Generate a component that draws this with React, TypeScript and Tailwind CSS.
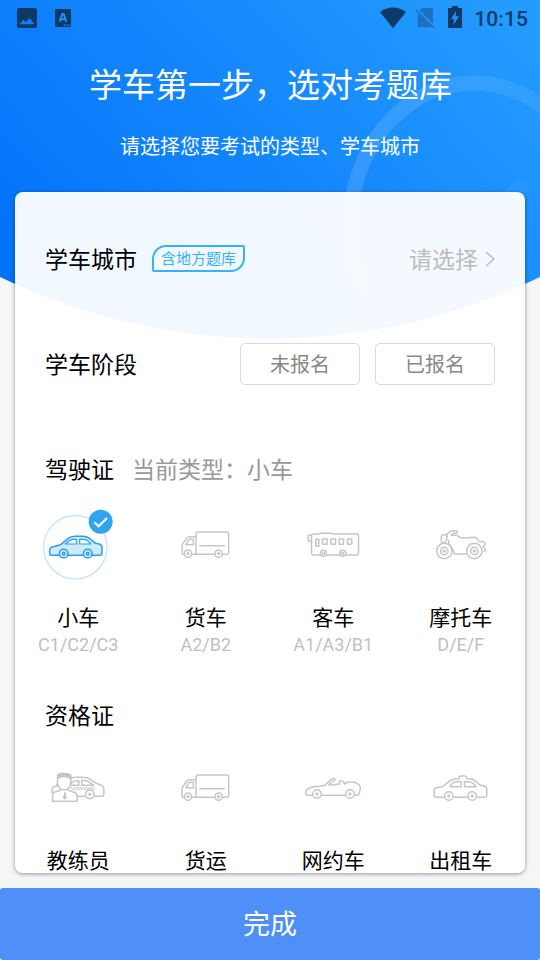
import type { ReactNode } from "react";

const GREY = "#c5c7c6";

function HeaderBackground() {
  return (
    <svg className="absolute inset-x-0 top-0" width="540" height="345" viewBox="0 0 540 345">
      <defs>
        <linearGradient id="sky" gradientUnits="userSpaceOnUse" x1="70" y1="310" x2="460" y2="-40">
          <stop offset="0" stopColor="#0373fb" />
          <stop offset="1" stopColor="#249bff" />
        </linearGradient>
        <linearGradient id="ring" x1="0" y1="0" x2="1" y2="0.3">
          <stop offset="0" stopColor="#fff" stopOpacity="0.14" />
          <stop offset="1" stopColor="#fff" stopOpacity="0.03" />
        </linearGradient>
        <clipPath id="dome">
          <path d="M0 0H540V277A623 623 0 0 1 0 277Z" />
        </clipPath>
      </defs>
      <g clipPath="url(#dome)">
        <rect width="540" height="345" fill="url(#sky)" />
        <ellipse cx="474" cy="226" rx="124" ry="143" fill="none" stroke="url(#ring)" strokeWidth="15" />
        <path d="M417 226L447 252L520 188" fill="none" stroke="#fff" strokeOpacity="0.04" strokeWidth="16" strokeLinecap="round" />
      </g>
    </svg>
  );
}

function StatusBar() {
  return (
    <div className="flex h-9 items-center text-[#0b3a66]">
      <svg className="ml-[17px]" width="20" height="20" viewBox="0 0 60 60">
        <rect width="60" height="60" rx="6" fill="currentColor" />
        <path d="M8 49L19 35L27 43L38 30L52 49Z" fill="#0f80fb" />
      </svg>
      <svg className="ml-[18px]" width="16" height="18" viewBox="0 0 48 54">
        <rect width="48" height="54" rx="3" fill="currentColor" />
        <path d="M14 38L22 15H26L34 38M17 31H31" fill="none" stroke="#2b8cf5" strokeWidth="6" />
        <path d="M26 48H31M34 48H38M41 48H45" stroke="#1783f5" strokeWidth="4" />
      </svg>
      <div className="flex-1" />
      <svg className="-mt-px" width="26" height="22" viewBox="0 0 78 66">
        <path d="M0 15C22-3 56-3 78 15L39 64Z" fill="currentColor" />
      </svg>
      <svg className="ml-[9px]" width="20" height="22" viewBox="0 0 60 66">
        <path d="M22 3H50Q54 3 54 7V50L14 10ZM8 18V57Q8 61 12 61H46Q49 61 50 58Z" fill="#1c70bd" />
        <path d="M3 8L57 63" stroke="#1c70bd" strokeWidth="4" />
      </svg>
      <svg className="-mt-0.5 ml-[13px]" width="14" height="22" viewBox="0 0 42 66">
        <path d="M0 6H12V0H30V6H42V66H0Z" fill="currentColor" />
        <path d="M24 14L9 40H18L17 57L33 31H23Z" fill="#2390f5" />
      </svg>
      <span className="ml-3 mr-3 pt-px font-[Roboto] text-[21px] font-medium leading-9 tracking-[0.1px]">10:15</span>
    </div>
  );
}

// Icons share a full-cell canvas drawn at three units per pixel.
function Icon({ x, y, color = GREY, children }: { x: number; y: number; color?: string; children: ReactNode }) {
  return (
    <svg
      className="block h-[90px] w-[127.5px]"
      viewBox={`${x} ${y} 382.5 270`}
      fill="none"
      stroke={color}
      strokeWidth="4.5"
      strokeLinecap="round"
      strokeLinejoin="round"
    >
      {children}
    </svg>
  );
}

function Wheel({ x, y, r = 11 }: { x: number; y: number; r?: number }) {
  return (
    <>
      <circle cx={x} cy={y} r={r} fill="#fefefe" />
      <circle cx={x} cy={y} r="3" strokeWidth="4" />
    </>
  );
}

function CarIcon() {
  return (
    <Icon x={-46} y={0} color="#2b9df0">
      <circle cx="135" cy="142" r="95" stroke="#bfe2fd" strokeWidth="3.5" />
      <path
        d="M64 166Q58 166 58 160V151Q58 142 69 140L91 134L113 116Q121 109 133 109H158Q169 109 178 116L196 130L207 132Q215 134 215 143V160Q215 166 209 166Z"
        fill="#cdeafe"
      />
      <path d="M105 132L120 121Q124 118 130 118H139V132ZM148 118H158Q166 118 172 122L181 132H148Z" fill="#fff" strokeWidth="3.5" />
      <g>
        <circle cx="100" cy="161" r="13" fill="#cdeafe" />
        <circle cx="100" cy="161" r="4" />
        <circle cx="172" cy="161" r="13" fill="#cdeafe" />
        <circle cx="172" cy="161" r="4" />
      </g>
      <circle cx="211" cy="65" r="36" fill="#2fa4f1" stroke="none" />
      <path d="M192 67L205 79L230 54" stroke="#fff" strokeWidth="6.5" strokeLinecap="butt" strokeLinejoin="miter" />
    </Icon>
  );
}

function TruckIcon() {
  return (
    <Icon x={-54} y={-30}>
      <path d="M108 80H89Q82 80 78 87L67 104Q66 106 66 109V129Q66 133 70 133H108M108 71Q108 66 113 66H201Q206 66 206 71V128Q206 133 201 133H108Z" />
      <path d="M100 88V104H78L85 91Q87 88 91 88ZM119 107H193" />
      <Wheel x={84} y={131} />
      <Wheel x={176} y={131} />
    </Icon>
  );
}

function BusIcon() {
  return (
    <Icon x={-60.5} y={-30}>
      <path d="M64 94H58Q54 94 54 90V80Q54 76 58 76H64" />
      <path d="M64 77Q64 72 70 72H88L91 70H123L127 72H200Q205 72 205 77V130Q205 135 200 135H69Q64 135 64 130Z" />
      <path d="M77 88H86V109H77ZM97 87H111V103H97ZM122 87H136V103H122ZM147 87H160V103H147ZM172 87H185V103H172Z" />
      <Wheel x={100} y={130} r={9} />
      <Wheel x={158} y={130} r={9} />
    </Icon>
  );
}

function MotorcycleIcon() {
  return (
    <Icon x={321} y={-30}>
      <path d="M470 74H460Q454 74 454 81V91Q454 98 459 98H465L471 87Z" />
      <path d="M471 79V72L482 64Q485 62 489 62H497Q502 62 502 66Q502 70 497 70H489L484 76L500 76L508 81Q514 85 522 84L552 82Q559 82 563 88L567 94L581 96Q586 97 586 103L580 109L586 120Q587 125 583 124M476 91V101Q484 107 490 122L493 132H529" />
      <Wheel x={463} y={123} r={23} />
      <circle cx="463" cy="123" r="11" />
      <Wheel x={553} y={123} r={23} />
      <circle cx="553" cy="123" r="11" />
    </Icon>
  );
}

function CoachIcon() {
  return (
    <Icon x={-45.5} y={-36}>
      <path d="M121 70Q128 67 140 67H156Q171 67 180 73L194 82Q201 87 210 89Q221 93 221 101V117Q221 124 214 124H195M165 124H142" />
      <path d="M123 85L131 79Q134 77 146 77V91H122M155 76Q170 76 177 81L191 91H155Z" />
      <path d="M121 98H194" strokeWidth="4.5" strokeDasharray="4.5 4.5" strokeLinecap="butt" />
      <path d="M125.5 102.5H194" strokeWidth="4.5" strokeDasharray="4.5 4.5" strokeLinecap="butt" />
      <Wheel x={179} y={118} r={13} />
      <path d="M82 76V86Q84 98 94 104H110Q119 98 122 87V73M82 88H79M93 104L85 108L74 111Q68 113 67 123V139H141V123Q139 113 130 111L118 107L110 104M80 92Q66 95 65 105V113" />
      <path d="M82 72V60Q89 54 101 55Q115 55 122 60V73Q118 65 107 65H95Q87 66 82 72Z" fill={GREY} />
      <path d="M104 113L100 129L104 133L108 129Z" fill={GREY} strokeWidth="3" />
    </Icon>
  );
}

function ConvertibleIcon() {
  return (
    <Icon x={-60} y={-36}>
      <path d="M66 121H56Q47 121 47 110Q47 105 53 102Q64 95 91 94L104 91Q115 81 127 71Q134 69 135 73Q135 76 131 78L116 89Q128 91 138 88H148V81Q149 76 154 77Q159 77 161 81L163 86L174 82Q186 79 199 84L208 90Q211 93 211 99L208 115Q206 121 200 121H194M165 121H96" />
      <path d="M163 87L170 83" />
      <Wheel x={81} y={117} r={13} />
      <Wheel x={180} y={117} r={13} />
    </Icon>
  );
}

function TaxiIcon() {
  return (
    <Icon x={321.5} y={-36}>
      <path d="M462 127H440Q433 127 433 121V105Q433 98 441 98L457 95Q466 90 473 83Q482 73 496 72L508 71V68Q508 63 514 63H525Q530 63 530 68V71H540Q552 72 561 81L570 90L584 93Q591 96 591 104V121Q591 127 584 127H562M492 127H532" />
      <path d="M481 94L488 85Q493 80 501 80H514V95H481ZM524 80H537Q546 80 552 87L559 95H524Z" />
      <Wheel x={477} y={123} r={13} />
      <Wheel x={547} y={123} r={13} />
    </Icon>
  );
}

const licences = [
  { name: "小车", code: "C1/C2/C3", icon: <CarIcon /> },
  { name: "货车", code: "A2/B2", icon: <TruckIcon /> },
  { name: "客车", code: "A1/A3/B1", icon: <BusIcon /> },
  { name: "摩托车", code: "D/E/F", icon: <MotorcycleIcon /> },
];

const certificates = [
  { name: "教练员", icon: <CoachIcon /> },
  { name: "货运", icon: <TruckIcon /> },
  { name: "网约车", icon: <ConvertibleIcon /> },
  { name: "出租车", icon: <TaxiIcon /> },
];

export default function App() {
  return (
    <div className="relative h-[960px] w-[540px] overflow-hidden bg-[#f5f6f8] font-['Noto_Sans_CJK_SC',sans-serif]">
      <HeaderBackground />
      <div className="relative flex h-full flex-col">
        <StatusBar />
        <h1 className="mt-[23px] pl-px text-center text-[33px] leading-[48px] text-white">学车第一步，选对考题库</h1>
        <p className="mt-6 text-center text-[20px] leading-[30px] text-white">请选择您要考试的类型、学车城市</p>

        <main className="mx-[15px] mt-[31px] h-[681px] shrink-0 overflow-hidden rounded-[8px] bg-white/95 text-[23px] text-black shadow-[0_1px_4px_rgba(0,0,0,0.4)]">
          <div className="mt-[46px] flex h-10 items-center px-[30px] leading-10">
            <span>学车城市</span>
            <span className="ml-[15px] flex h-[27px] w-[93px] items-center justify-center rounded-tl-[14px] rounded-tr-[2px] rounded-br-[14px] rounded-bl-[2px] border-2 border-[#35b2fb] pb-px text-[15px] leading-none text-[#35b2fb]">
              含地方题库
            </span>
            <span className="ml-auto text-[#bcbcbc]">请选择</span>
            <svg className="ml-[7px] mt-px" width="10" height="16" viewBox="0 0 10 16" fill="none" stroke="#bcbcbc" strokeWidth="1.5">
              <path d="M1 1L9 8L1 15" />
            </svg>
          </div>

          <div className="mt-[65px] flex h-[42px] items-center px-[30px]">
            <span className="flex-1 pb-0.5">学车阶段</span>
            <div className="flex gap-[15px] text-[20px] text-[#888]">
              <button className="h-[42px] w-[120px] rounded-[5px] border border-[#d8d9da]">未报名</button>
              <button className="h-[42px] w-[120px] rounded-[5px] border border-[#d8d9da]">已报名</button>
            </div>
          </div>

          <div className="mt-[63px] flex h-10 items-center px-[30px] leading-10">
            <span>驾驶证</span>
            <span className="ml-[18px] text-[#999]">当前类型：小车</span>
          </div>

          <div className="-ml-[0.5px] mt-3 grid w-[510px] grid-cols-4">
            {licences.map((item) => (
              <div key={item.name} className="flex flex-col items-center">
                {item.icon}
                <span className="mt-[11px] text-[21px] leading-[30px]">{item.name}</span>
                <span className="mt-0.5 font-[Roboto] text-[18px] leading-6 text-[#bfbfbf]">{item.code}</span>
              </div>
            ))}
          </div>

          <h2 className="mt-[37px] px-[30px] leading-10">资格证</h2>

          <div className="-ml-[0.5px] mt-[9px] grid w-[510px] grid-cols-4">
            {certificates.map((item) => (
              <div key={item.name} className="flex flex-col items-center">
                {item.icon}
                <span className="mt-[11px] text-[21px] leading-[30px]">{item.name}</span>
              </div>
            ))}
          </div>
        </main>

        <button className="mt-[15px] h-[72px] shrink-0 rounded-[3px] bg-[#4f8ff8] pb-px text-[27px] text-white">完成</button>
      </div>
    </div>
  );
}
